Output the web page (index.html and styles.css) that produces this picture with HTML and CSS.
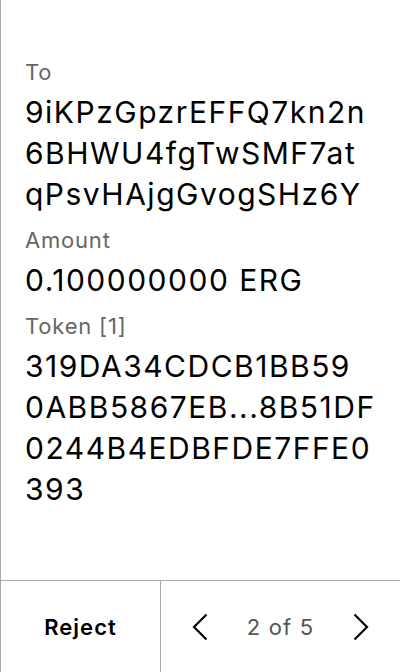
FILE: index.html
```html
<!DOCTYPE html>
<html>
<head>
<meta charset="utf-8">
<link rel="stylesheet" href="styles.css">
</head>
<body>
<div class="screen">
  <main class="content">
    <div class="label first">To</div>
    <div class="value">9iKPzGpzrEFFQ7kn2n<br>6BHWU4fgTwSMF7at<br>qPsvHAjgGvogSHz6Y</div>
    <div class="label">Amount</div>
    <div class="value">0.100000000 ERG</div>
    <div class="label">Token [1]</div>
    <div class="value">319DA34CDCB1BB59<br>0ABB5867EB...8B51DF<br>0244B4EDBFDE7FFE0<br>393</div>
  </main>
  <footer class="footer">
    <div class="reject">Reject</div>
    <div class="pager">
      <svg class="chev" width="24" height="30" viewBox="0 0 24 30"><path d="M18.5 2.5 L6 15 L18.5 27.5" fill="none" stroke="#000" stroke-width="2.2"/></svg>
      <span class="count">2 of 5</span>
      <svg class="chev" width="24" height="30" viewBox="0 0 24 30"><path d="M5.5 2.5 L18 15 L5.5 27.5" fill="none" stroke="#000" stroke-width="2.2"/></svg>
    </div>
  </footer>
</div>
</body>
</html>
```
FILE: styles.css
```css
html, body {
  margin: 0;
  padding: 0;
  background: #fff;
}
body {
  font-family: Inter, "Noto Sans", sans-serif;
  color: #000;
}
.screen {
  width: 400px;
  height: 672px;
  box-sizing: border-box;
  border-left: 1px solid #aaa;
  display: flex;
  flex-direction: column;
}
.content {
  flex: 1;
  padding: 0 0 0 24px;
}
.label {
  font-size: 22px;
  line-height: 28px;
  color: #666;
  letter-spacing: 0.8px;
  margin-top: 11px;
}
.label.first {
  margin-top: 58px;
}
.value {
  font-size: 30px;
  line-height: 41px;
  letter-spacing: 1.5px;
  margin-top: 6px;
}
.footer {
  height: 91px;
  border-top: 1px solid #aaa;
  display: flex;
}
.reject {
  width: 159px;
  border-right: 1px solid #aaa;
  display: flex;
  align-items: center;
  justify-content: center;
  font-size: 22px;
  font-weight: 600;
  letter-spacing: 1px;
}
.pager {
  flex: 1;
  display: flex;
  align-items: center;
  justify-content: center;
  gap: 35px;
}
.count {
  font-size: 22px;
  color: #555;
  letter-spacing: 1.2px;
}
.chev {
  display: block;
}
```
